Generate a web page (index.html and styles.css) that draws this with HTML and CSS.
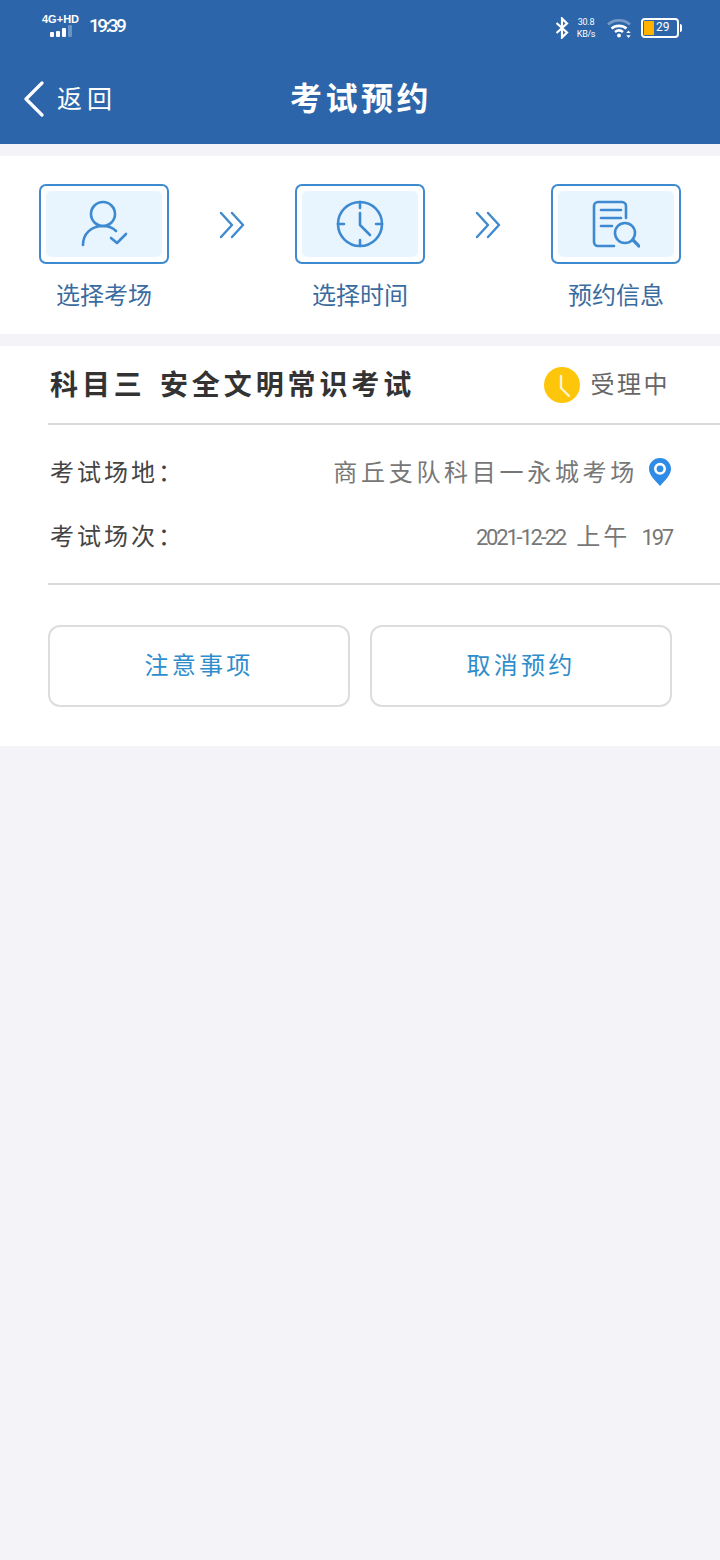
FILE: index.html
```html
<!DOCTYPE html>
<html lang="zh-CN">
<head>
  <meta charset="UTF-8" />
  <meta name="viewport" content="width=device-width, initial-scale=1.0" />
  <title>考试预约</title>
  <link rel="stylesheet" href="styles.css">
</head>
<body>
  <!-- Blue header with status bar -->
  <header class="header">
    <div class="status-bar">
      <div class="status-left">
        <div class="network">
          <div class="network-text">4G<sup>+</sup>HD</div>
          <div class="signal"><i class="b1"></i><i class="b2"></i><i class="b3"></i><i class="b4"></i></div>
        </div>
        <div class="clock">19:39</div>
      </div>
      <div class="status-right">
        <svg class="bt-icon" width="14" height="22" viewBox="0 0 14 22" fill="none" stroke="#fff" stroke-width="2.200">
          <path d="M1.500 6l10.500 9.500L7 20.500V1.500l5 5L1.500 16"/>
        </svg>
        <div class="speed"><span>30.8</span><span>KB/s</span></div>
        <svg class="wifi-icon" width="26" height="20" viewBox="0 0 26 20" fill="none" stroke-linecap="butt">
          <path d="M1 6.500C7 1 17 1 23 6.500" stroke="#fff" stroke-opacity=".35" stroke-width="2.600"/>
          <path d="M4.500 10.500C8.500 7 15.500 7 19.500 10.500" stroke="#fff" stroke-width="2.600"/>
          <path d="M8 14c2.500-2 5.500-2 8 0" stroke="#fff" stroke-width="2.600"/>
          <circle cx="12" cy="17.500" r="2" fill="#fff"/>
          <path d="M21.500 12.500l2.200 2.600h-4.400zM21.500 20l2.200-2.800h-4.400z" fill="#fff"/>
        </svg>
        <div class="battery"><div class="battery-fill"></div><span>29</span></div>
      </div>
    </div>
    <div class="nav">
      <div class="back">
        <svg width="22" height="36" viewBox="0 0 22 36" fill="none" stroke="#fff" stroke-width="3.200" stroke-linecap="round" stroke-linejoin="round">
          <path d="M19 2L3 18l16 16"/>
        </svg>
        <span>返回</span>
      </div>
      <h1 class="nav-title">考试预约</h1>
    </div>
  </header>

  <!-- Three booking steps -->
  <section class="steps">
    <div class="step">
      <div class="step-box">
        <div class="step-inner">
          <svg width="48" height="48" viewBox="0 0 48 48" fill="none" stroke="#3d8ad0" stroke-width="2.600" stroke-linecap="round" stroke-linejoin="round">
            <circle cx="23" cy="14" r="12"/>
            <path d="M3 45c0-11 8-19 20-19 6 0 10 2 13 5"/>
            <path d="M31 38l6 5 9-9"/>
          </svg>
        </div>
      </div>
      <div class="step-label">选择考场</div>
    </div>
    <svg class="step-arrow" width="26" height="28" viewBox="0 0 26 28" fill="none" stroke="#3d8ad0" stroke-width="2.400" stroke-linecap="round" stroke-linejoin="round">
      <path d="M2 2l11 12L2 26M13 2l11 12-11 12"/>
    </svg>
    <div class="step">
      <div class="step-box">
        <div class="step-inner">
          <svg width="48" height="48" viewBox="0 0 48 48" fill="none" stroke="#3d8ad0" stroke-width="2.600" stroke-linecap="round" stroke-linejoin="round">
            <circle cx="24" cy="24" r="22"/>
            <path d="M24 2v6M24 40v6M2 24h6M40 24h6M24 13v12l10 10"/>
          </svg>
        </div>
      </div>
      <div class="step-label">选择时间</div>
    </div>
    <svg class="step-arrow" width="26" height="28" viewBox="0 0 26 28" fill="none" stroke="#3d8ad0" stroke-width="2.400" stroke-linecap="round" stroke-linejoin="round">
      <path d="M2 2l11 12L2 26M13 2l11 12-11 12"/>
    </svg>
    <div class="step">
      <div class="step-box">
        <div class="step-inner">
          <svg width="48" height="48" viewBox="0 0 48 48" fill="none" stroke="#3d8ad0" stroke-width="2.600" stroke-linecap="round" stroke-linejoin="round">
            <path d="M34 18V6a4 4 0 0 0-4-4H6a4 4 0 0 0-4 4v36a4 4 0 0 0 4 4h16"/>
            <path d="M9 10h20M9 18h20M9 26h11"/>
            <circle cx="33" cy="33" r="10"/>
            <path d="M41 40l6 6" stroke-width="3.200"/>
          </svg>
        </div>
      </div>
      <div class="step-label">预约信息</div>
    </div>
  </section>

  <!-- Booking detail card -->
  <section class="card">
    <div class="card-head">
      <div class="card-title">科目三 安全文明常识考试</div>
      <div class="status">
        <svg width="36" height="36" viewBox="0 0 36 36">
          <circle cx="18" cy="18" r="18" fill="#fec60a"/>
          <path d="M17 9v12l8 8" fill="none" stroke="#fff4cf" stroke-width="2.400" stroke-linecap="round" stroke-linejoin="round"/>
        </svg>
        <span>受理中</span>
      </div>
    </div>
    <div class="info">
      <div class="info-row">
        <div class="info-key">考试场地：</div>
        <div class="info-value">
          <span>商丘支队科目一永城考场</span>
          <svg class="pin" width="24" height="30" viewBox="0 0 24 30">
            <path fill-rule="evenodd" fill="#2f8be6" d="M12 1C5.900 1 1 5.800 1 11.800 1 18.500 7.500 24 12 29c4.500-5 11-10.500 11-17.200C23 5.800 18.100 1 12 1zm0 4.800a6 6 0 1 1 0 12 6 6 0 0 1 0-12z"/>
            <circle cx="12" cy="11.800" r="3.400" fill="#2f8be6"/>
          </svg>
        </div>
      </div>
      <div class="info-row">
        <div class="info-key">考试场次：</div>
        <div class="info-value session">2021-12-22 <em>上午</em> 197</div>
      </div>
    </div>
    <div class="actions">
      <button class="action">注意事项</button>
      <button class="action">取消预约</button>
    </div>
  </section>
</body>
</html>
```

FILE: styles.css
```css
:root {
  --blue: #2c65a9;
  --line-blue: #3d8ad0;
  --page: #f3f3f8;
  --cjk: "Noto Sans CJK SC", "Noto Sans", sans-serif;
}
* {
  margin: 0;
  padding: 0;
  box-sizing: border-box;
}
body {
  width: 720px;
  min-height: 1560px;
  background: var(--page);
  font-family: var(--cjk);
  color: #333;
}
/* Header */
.header {
  height: 144px;
  background: var(--blue);
  color: #fff;
}
.status-bar {
  height: 54px;
  padding: 13px 41px 0 42px;
  display: flex;
  justify-content: space-between;
  align-items: flex-start;
}
.status-left {
  display: flex;
  gap: 9px;
}
.network-text {
  font: bold 11px/12px "Liberation Sans", sans-serif;
  white-space: nowrap;
  width: 38px;
}
.network-text sup {
  font-size: 11px;
  line-height: 0;
  vertical-align: baseline;
}
.signal {
  display: flex;
  justify-content: center;
  align-items: flex-end;
  gap: 2px;
  height: 12px;
}
.signal i {
  width: 4px;
  background: #fff;
  border-radius: 1px;
}
.b1 { height: 5px; }
.b2 { height: 6px; }
.b3 { height: 9px; }
.signal .b4 { height: 12px; background: rgba(255,255,255,0.3); }
.clock {
  font: 500 19px/24px Roboto, sans-serif;
  letter-spacing: -2.600px;
  margin-top: 1px;
}
.status-right {
  display: flex;
  align-items: center;
  height: 30px;
}
.speed {
  display: flex;
  flex-direction: column;
  align-items: center;
  margin-left: 8px;
  font: 9px/12px Roboto, sans-serif;
  letter-spacing: -0.300px;
  width: 18px;
  white-space: nowrap;
}
.wifi-icon {
  margin-left: 12px;
}
.battery {
  position: relative;
  width: 38px;
  height: 20px;
  margin-left: 8px;
  border: 2px solid #fff;
  border-radius: 4px;
  padding: 1px;
  display: flex;
  align-items: center;
  gap: 2px;
}
.battery::after {
  content: "";
  position: absolute;
  right: -5px;
  top: 4px;
  width: 2px;
  height: 8px;
  background: #fff;
  border-radius: 0 2px 2px 0;
}
.battery-fill {
  width: 10px;
  height: 14px;
  background: #ffb300;
}
.battery span {
  font: 12px/14px Roboto, sans-serif;
  margin-top: -2px;
}
.nav {
  position: relative;
  height: 90px;
  display: flex;
  align-items: center;
  justify-content: center;
}
.back {
  position: absolute;
  left: 23px;
  top: 27px;
  display: flex;
  align-items: center;
  gap: 12px;
  font-size: 25px;
  line-height: 36px;
}
.back span {
  letter-spacing: 5px;
  margin-top: -4px;
}
.nav-title {
  font-size: 32px;
  font-weight: 700;
  letter-spacing: 3.500px;
  line-height: 36px;
  margin: -6px 0 0 2px;
}
/* Steps */
.steps {
  margin-top: 12px;
  height: 178px;
  padding: 28px 39px 0;
  background: #fff;
  display: flex;
  justify-content: space-between;
  align-items: flex-start;
}
.step {
  width: 130px;
  display: flex;
  flex-direction: column;
  align-items: center;
}
.step-box {
  width: 130px;
  height: 80px;
  padding: 5px;
  border: 2.500px solid var(--line-blue);
  border-radius: 7px;
}
.step-inner {
  height: 100%;
  background: #e8f4fe;
  border-radius: 5px;
  display: flex;
  align-items: center;
  justify-content: center;
}
.step-label {
  margin-top: 13px;
  font-size: 24px;
  line-height: 34px;
  color: #3b6c9f;
}
.step-arrow {
  margin-top: 27px;
}
/* Detail card */
.card {
  margin-top: 12px;
  height: 400px;
  padding-left: 48px;
  background: #fff;
}
.card-head {
  height: 79px;
  padding: 0 50px 0 2px;
  display: flex;
  align-items: center;
  justify-content: space-between;
  border-bottom: 2px solid #d9d9d9;
}
.card-title {
  font-size: 28px;
  font-weight: 700;
  letter-spacing: 3.900px;
  word-spacing: 4px;
  white-space: nowrap;
  padding-bottom: 4px;
}
.status {
  display: flex;
  align-items: center;
  gap: 11px;
  font-size: 24px;
  letter-spacing: 2.500px;
  color: #666;
}
.status span {
  margin-top: -4px;
}
.info {
  height: 160px;
  padding: 13px 48px 0 2px;
  border-bottom: 2px solid #d9d9d9;
}
.info-row {
  height: 64px;
  display: flex;
  align-items: center;
  justify-content: space-between;
  font-size: 24px;
}
.info-key {
  letter-spacing: 3px;
  color: #444;
}
.info-value {
  display: flex;
  align-items: center;
  gap: 10px;
  letter-spacing: 3.700px;
  color: #777;
}
.pin {
  margin-top: 4px;
}
.session {
  display: block;
  font-family: Roboto, var(--cjk);
  font-size: 22px;
  letter-spacing: -2.200px;
  white-space: pre;
}
.session em {
  font-style: normal;
  font-family: var(--cjk);
  font-size: 24px;
  letter-spacing: 3px;
  margin: 0 8px;
}
.actions {
  margin-top: 40px;
  padding-right: 48px;
  display: flex;
  gap: 20px;
}
.action {
  flex: 1;
  height: 82px;
  background: #fff;
  border: 2px solid #dddddd;
  border-radius: 12px;
  padding-bottom: 6px;
  font-family: var(--cjk);
  font-size: 24px;
  letter-spacing: 3.300px;
  color: #2f8dcb;
}
```
